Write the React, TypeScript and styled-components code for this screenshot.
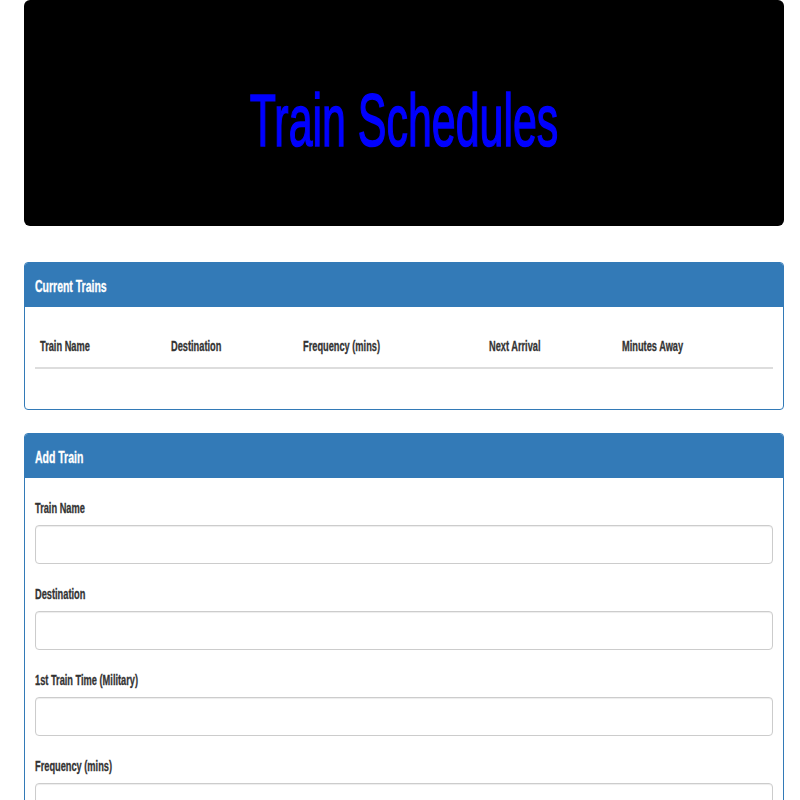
import React from "react";
import styled, { createGlobalStyle } from "styled-components";

const Global = createGlobalStyle`
  html, body {
    margin: 0;
    padding: 0;
    background: #ffffff;
    font-family: "Liberation Sans", Arial, sans-serif;
    color: #333333;
  }
  * { box-sizing: border-box; }
`;

const Page = styled.div`
  padding: 0 16px 40px 24px;
  display: flex;
  flex-direction: column;
`;

const Jumbotron = styled.header`
  height: 226px;
  background: #000000;
  border-radius: 6px;
  display: flex;
  align-items: center;
  justify-content: center;
  padding-top: 15px;
  margin-bottom: 36px;
`;

const Title = styled.h1`
  margin: 0;
  display: inline-block;
  font-family: "Liberation Sans", Arial, sans-serif;
  font-weight: 400;
  font-size: 74px;
  line-height: 1;
  color: #0000ff;
  -webkit-text-stroke: 1.6px #0000ff;
  white-space: nowrap;
  transform: scaleX(0.58);
  transform-origin: center;
`;

const Panel = styled.section`
  border: 1px solid #337ab7;
  border-radius: 4px;
  overflow: hidden;
  margin-bottom: 23px;
`;

const PanelHeading = styled.div`
  height: 44px;
  background: #337ab7;
  display: flex;
  align-items: center;
  padding: 3px 10px 0 10px;
`;

const PanelTitle = styled.h3`
  margin: 0;
  display: inline-block;
  font-size: 16px;
  font-weight: 700;
  color: #ffffff;
  -webkit-text-stroke: 0.3px #ffffff;
  white-space: nowrap;
  transform: scaleX(0.655);
  transform-origin: left center;
`;

const PanelBody = styled.div<{ $top: number; $bottom: number }>`
  padding: ${(p) => p.$top}px 10px ${(p) => p.$bottom}px 10px;
`;

const TableHead = styled.div`
  display: grid;
  grid-template-columns: 131px 132px 186px 133px 1fr;
  height: 50px;
  border-bottom: 2px solid #dddddd;
`;

const HeadCell = styled.div`
  display: flex;
  align-items: center;
  padding: 6px 0 0 5px;
`;

const HeadText = styled.span`
  display: inline-block;
  font-size: 14px;
  font-weight: 700;
  color: #333333;
  -webkit-text-stroke: 0.3px #333333;
  white-space: nowrap;
  transform: scaleX(0.66);
  transform-origin: left center;
`;

const FormGroup = styled.div`
  display: flex;
  flex-direction: column;
  margin-bottom: 22px;
  &:last-child { margin-bottom: 0; }
`;

const FieldLabel = styled.label`
  display: block;
  height: 17px;
  line-height: 17px;
  margin-bottom: 8px;
  font-size: 14px;
  font-weight: 700;
  color: #333333;
  -webkit-text-stroke: 0.3px #333333;
  white-space: nowrap;
  transform: scaleX(0.66);
  transform-origin: left center;
`;

const Input = styled.input`
  display: block;
  width: 100%;
  height: 39px;
  border: 1px solid #cccccc;
  border-radius: 4px;
  background: #ffffff;
  box-shadow: inset 0 1px 1px rgba(0, 0, 0, 0.075);
  padding: 6px 12px;
  font-size: 14px;
  font-family: inherit;
  outline: none;
`;

const columns = ["Train Name", "Destination", "Frequency (mins)", "Next Arrival", "Minutes Away"];
const fields = [
  { id: "name", label: "Train Name" },
  { id: "dest", label: "Destination" },
  { id: "first", label: "1st Train Time (Military)" },
  { id: "freq", label: "Frequency (mins)" },
];

export default function App() {
  return (
    <>
      <Global />
      <Page>
        <Jumbotron>
          <Title>Train Schedules</Title>
        </Jumbotron>

        <Panel>
          <PanelHeading>
            <PanelTitle>Current Trains</PanelTitle>
          </PanelHeading>
          <PanelBody $top={12} $bottom={40}>
            <TableHead>
              {columns.map((c) => (
                <HeadCell key={c}>
                  <HeadText>{c}</HeadText>
                </HeadCell>
              ))}
            </TableHead>
          </PanelBody>
        </Panel>

        <Panel>
          <PanelHeading>
            <PanelTitle>Add Train</PanelTitle>
          </PanelHeading>
          <PanelBody $top={22} $bottom={20}>
            {fields.map((f) => (
              <FormGroup key={f.id}>
                <FieldLabel htmlFor={f.id}>{f.label}</FieldLabel>
                <Input id={f.id} type="text" />
              </FormGroup>
            ))}
          </PanelBody>
        </Panel>
      </Page>
    </>
  );
}
